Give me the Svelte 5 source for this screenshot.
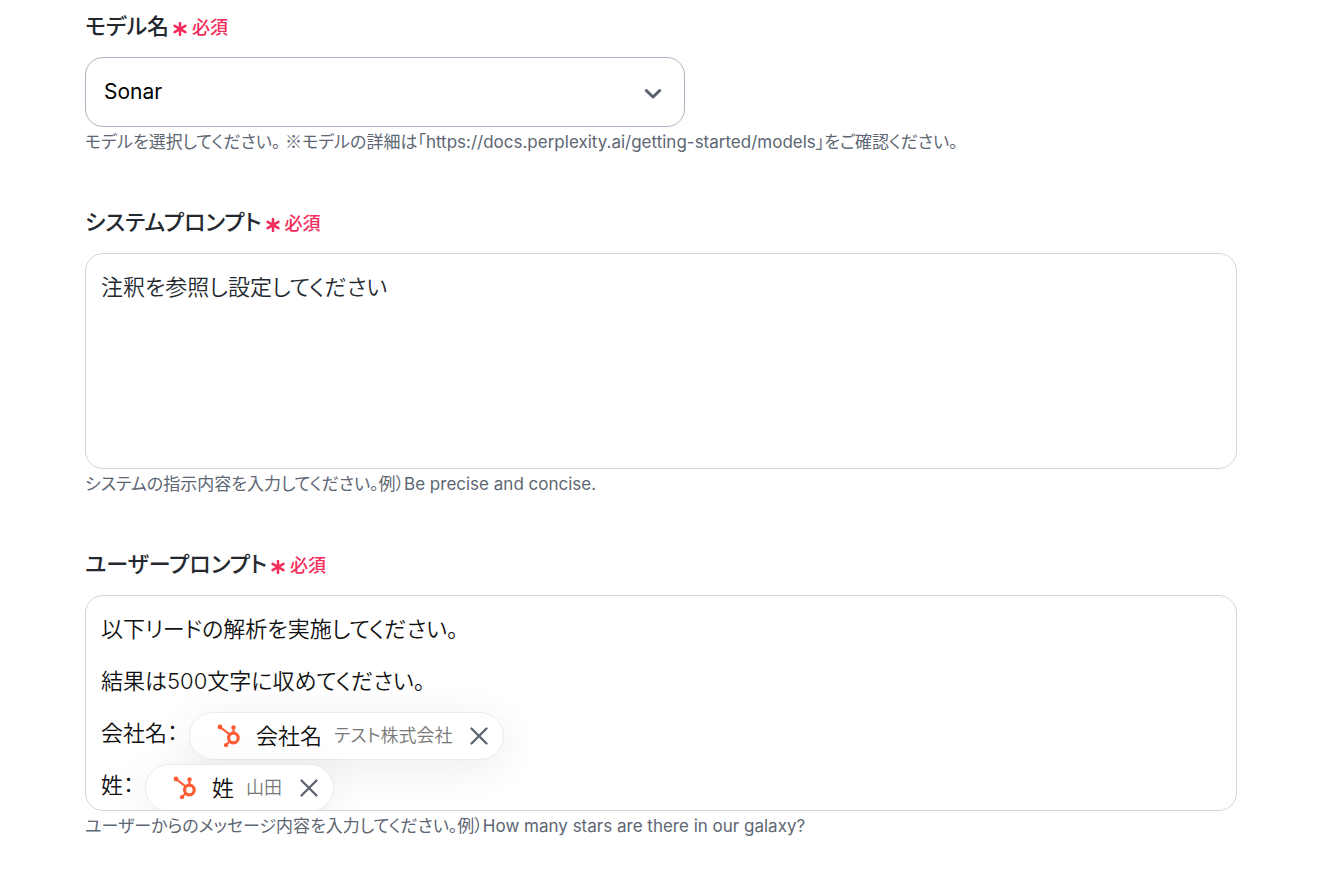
<script lang="ts">
  const models = ["Sonar", "Sonar Pro", "Sonar Reasoning", "Sonar Deep Research"];

  let model = $state("Sonar");
  let systemPrompt = $state("注釈を参照し設定してください");

  let variables = $state([
    { prefix: "会社名：", name: "会社名", sample: "テスト株式会社" },
    { prefix: "姓：", name: "姓", sample: "山田" },
  ]);

  const removeVariable = (name: string) => {
    variables = variables.filter((item) => item.name !== name);
  };
</script>

{#snippet required()}
  <span class="required">
    <svg class="asterisk" viewBox="0 0 14 14" aria-hidden="true">
      <path d="M7 1v12M1.6 3.9l10.8 6.2M12.4 3.9L1.6 10.1" />
    </svg>
    必須
  </span>
{/snippet}

<form class="settings">
  <div class="field">
    <label class="label" for="model">モデル名 {@render required()}</label>
    <div class="select-wrap">
      <select id="model" bind:value={model} aria-describedby="model-help">
        {#each models as item}
          <option value={item}>{item}</option>
        {/each}
      </select>
      <svg class="chevron" viewBox="0 0 18 12" aria-hidden="true">
        <path d="M2.3 2.5L9 9L15.7 2.5" />
      </svg>
    </div>
    <p class="help" id="model-help">
      モデルを選択してください。 <span class="mark">※</span>モデルの詳細は「https://docs.perplexity.ai/getting-started/models」をご確認ください。
    </p>
  </div>

  <div class="field">
    <label class="label" for="system">システムプロンプト {@render required()}</label>
    <textarea id="system" class="box" bind:value={systemPrompt} aria-describedby="system-help"
    ></textarea>
    <p class="help" id="system-help">
      システムの指示内容を入力してください。例）Be precise and concise.
    </p>
  </div>

  <div class="field">
    <div class="label" id="user-label">ユーザープロンプト {@render required()}</div>
    <div
      class="box editor"
      role="textbox"
      tabindex="0"
      contenteditable="true"
      aria-multiline="true"
      aria-labelledby="user-label"
      aria-describedby="user-help"
    >
      <p>以下リードの解析を実施してください。</p>
      <p>結果は500文字に収めてください。</p>
      {#each variables as item (item.name)}
        <p>
          {item.prefix}
          <span class="chip" contenteditable="false">
            <svg class="hub" viewBox="0 0 24 24" aria-hidden="true">
              <path d="M3 3l9.5 7.3M16.5 3.5V10M12.3 17.7L9 21" />
              <circle class="ring" cx="16.4" cy="14" r="4.8" />
              <circle cx="3" cy="3" r="2.4" />
              <circle cx="16.5" cy="3.4" r="2.2" />
              <circle cx="9" cy="21.2" r="2.1" />
            </svg>
            <span class="chip-name">{item.name}</span>
            <span class="chip-sample">{item.sample}</span>
            <button
              type="button"
              aria-label="{item.name}を削除"
              onclick={() => removeVariable(item.name)}
            >
              <svg viewBox="0 0 18 18" aria-hidden="true">
                <path d="M1.5 1.5l15 15M16.5 1.5l-15 15" />
              </svg>
            </button>
          </span>
        </p>
      {/each}
    </div>
    <p class="help" id="user-help">
      ユーザーからのメッセージ内容を入力してください。例）How many stars are there in our galaxy?
    </p>
  </div>
</form>

<style>
  :global(body) {
    margin: 0;
    background: #fff;
  }

  .settings {
    display: flex;
    flex-direction: column;
    gap: 54px;
    padding: 12px 81px 40px 85px;
    font-family: Inter, "Noto Sans CJK JP", sans-serif;
    font-feature-settings: "palt";
    color: #23292f;
  }

  .label {
    display: flex;
    align-items: center;
    gap: 4px;
    height: 28px;
    margin-bottom: 17px;
    font-size: 22px;
    font-weight: 500;
    line-height: 28px;
  }

  .required {
    display: inline-flex;
    align-items: center;
    gap: 5px;
    padding-top: 4px;
    font-size: 18px;
    line-height: 26px;
    color: #f22c5b;
  }

  .asterisk {
    width: 14px;
    height: 14px;
    margin-top: 2px;
    fill: none;
    stroke: currentColor;
    stroke-width: 2.5;
    stroke-linecap: round;
  }

  .select-wrap {
    position: relative;
    max-width: 600px;
  }

  select {
    box-sizing: border-box;
    display: block;
    width: 100%;
    height: 70px;
    padding: 0 56px 2px 18px;
    border: 1px solid #aab4c2;
    border-radius: 18px;
    appearance: none;
    background: #fff;
    font: inherit;
    font-size: 21px;
    color: #000;
  }

  .chevron {
    position: absolute;
    top: 31px;
    right: 23px;
    width: 18px;
    height: 12px;
    fill: none;
    stroke: #57606c;
    stroke-width: 3;
    stroke-linecap: round;
    stroke-linejoin: round;
    pointer-events: none;
  }

  .box {
    box-sizing: border-box;
    display: block;
    width: 100%;
    height: 216px;
    padding: 7px 15px;
    border: 1px solid #cfd6de;
    border-radius: 18px;
    background: #fff;
    font: inherit;
    font-feature-settings: inherit;
    font-size: 22px;
    font-weight: 350;
    line-height: 52px;
    color: #23292f;
    overflow: hidden;
    resize: none;
  }

  .editor {
    color: #111;
  }

  .editor p {
    display: flex;
    align-items: center;
    gap: 11px;
    height: 52px;
    margin: 0;
  }

  .chip {
    box-sizing: border-box;
    display: inline-flex;
    align-items: center;
    height: 48px;
    margin-top: 5px;
    padding: 0 15px 0 27px;
    border: 1px solid #e8ebf0;
    border-radius: 24px;
    background: #fff;
    box-shadow: 0 8px 40px rgb(0 0 0 / 8%);
  }

  .hub {
    width: 24px;
    height: 24px;
    margin-right: 15px;
    fill: #ff5c35;
  }

  .hub path,
  .hub .ring {
    fill: none;
    stroke: #ff5c35;
    stroke-width: 3.2;
  }

  .hub path {
    stroke-width: 2.2;
  }

  .chip-name {
    margin-right: 12px;
  }

  .chip-sample {
    margin-right: 18px;
    font-size: 18px;
    color: #777;
  }

  .chip button {
    display: flex;
    padding: 0;
    border: 0;
    background: none;
    cursor: pointer;
  }

  .chip button svg {
    width: 18px;
    height: 18px;
    fill: none;
    stroke: #57606c;
    stroke-width: 2.2;
    stroke-linecap: round;
  }

  .help {
    margin: 3px 0 0;
    font-size: 17px;
    line-height: 24px;
    color: #5d6673;
  }

  .mark {
    font-family: "Noto Sans CJK JP", sans-serif;
    line-height: 1;
  }
</style>
